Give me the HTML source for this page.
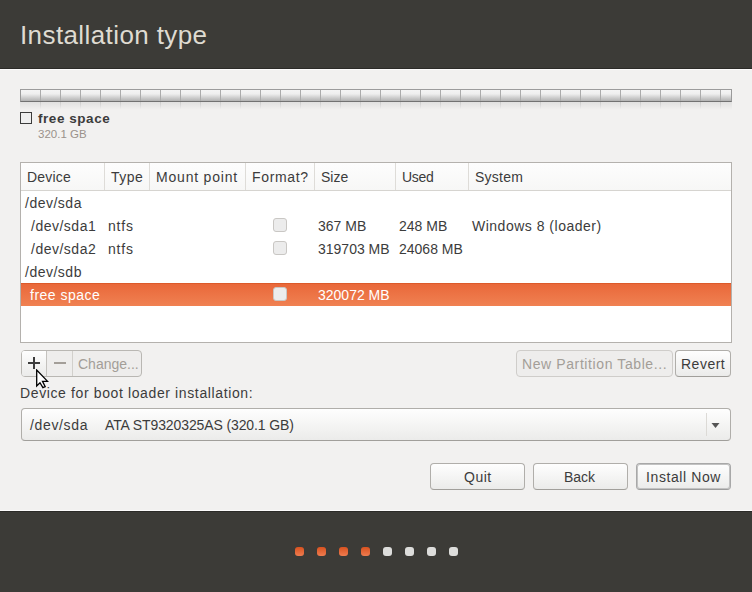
<!DOCTYPE html>
<html><head><meta charset="utf-8">
<style>
*{margin:0;padding:0;box-sizing:border-box}
html,body{width:752px;height:592px;overflow:hidden;background:#f2f1f0;font-family:"Liberation Sans",sans-serif;color:#3c3c3c}
div{position:absolute}
.t{font-size:14px;line-height:16px;white-space:nowrap;letter-spacing:0.5px}
.n{letter-spacing:0}
#hdr{left:0;top:0;width:752px;height:68px;background:#3c3b37}
#hdrl{left:0;top:68px;width:752px;height:1px;background:#2c2b28}
#hdrw{left:0;top:69px;width:752px;height:1px;background:#fdfcfb}
#title{left:20px;top:20px;font-size:26px;line-height:30px;color:#dfdbd2;white-space:nowrap;letter-spacing:0.4px}
#bar{left:20px;top:89px;width:712px;height:13px;border:1px solid #9a9a9a;border-bottom-color:#727272;border-top-color:#9c9c9c;background:linear-gradient(#f4f4f4,#efefef 35%,#c9c9c9 75%,#b2b2b2)}
#refl{left:20px;top:102px;width:712px;height:8px;background:linear-gradient(rgba(200,200,200,0.4),rgba(242,241,240,0))}
.bs{width:1px;top:90px;height:11px;background:#ababab}
.rs{width:1px;top:102px;height:7px;background:linear-gradient(rgba(160,160,160,0.35),rgba(242,241,240,0))}
#fs-cb{left:20px;top:112px;width:12px;height:12px;border:1px solid #3c3c3c;background:#efefef}
#tbl{left:20px;top:162px;width:712px;height:181px;border:1px solid #b4b1ad;background:#fff}
#th{left:21px;top:163px;width:710px;height:27px;background:linear-gradient(#fdfdfd,#f7f7f6)}
#thb{left:21px;top:190px;width:710px;height:1px;background:#d6d4d0}
.sep{top:163px;width:1px;height:27px;background:#dedcd8}
.cb{width:14px;height:14px;border:1px solid #c9c7c4;border-radius:3px;background:#ececec}
#sel{left:21px;top:283px;width:710px;height:23px;border-top:1px solid #dc5a2a;background:linear-gradient(#e9683a,#f08152)}
.btn{border:1px solid #b0aeaa;border-bottom-color:#a19f9b;border-radius:4px;background:linear-gradient(#fefefe,#f3f3f2 60%,#ebebea)}
.ins{background:#eeedec;border-color:#cfcdca}
.gry{color:#a39e98}
#ftrw{left:0;top:510px;width:752px;height:1px;background:#fdfcfb}
#ftrl{left:0;top:511px;width:752px;height:1px;background:#2c2b28}
#ftr{left:0;top:512px;width:752px;height:80px;background:#3c3b37}
.dot{top:547px;width:9px;height:9px;border-radius:3px}
.on{background:linear-gradient(#d9521f,#ef7c50)}
.off{background:#dddddb}
</style></head><body>
<div id="hdr"></div><div id="hdrl"></div><div id="hdrw"></div>
<div id="title">Installation type</div>

<div id="bar"></div>
<div id="refl"></div>
<div class="bs" style="left:40px"></div><div class="bs" style="left:60px"></div><div class="bs" style="left:80px"></div><div class="bs" style="left:100px"></div><div class="bs" style="left:120px"></div><div class="bs" style="left:140px"></div><div class="bs" style="left:160px"></div><div class="bs" style="left:180px"></div><div class="bs" style="left:200px"></div><div class="bs" style="left:220px"></div><div class="bs" style="left:240px"></div><div class="bs" style="left:260px"></div><div class="bs" style="left:280px"></div><div class="bs" style="left:300px"></div><div class="bs" style="left:320px"></div><div class="bs" style="left:340px"></div><div class="bs" style="left:360px"></div><div class="bs" style="left:380px"></div><div class="bs" style="left:400px"></div><div class="bs" style="left:420px"></div><div class="bs" style="left:440px"></div><div class="bs" style="left:460px"></div><div class="bs" style="left:480px"></div><div class="bs" style="left:500px"></div><div class="bs" style="left:520px"></div><div class="bs" style="left:540px"></div><div class="bs" style="left:560px"></div><div class="bs" style="left:580px"></div><div class="bs" style="left:600px"></div><div class="bs" style="left:620px"></div><div class="bs" style="left:640px"></div><div class="bs" style="left:660px"></div><div class="bs" style="left:680px"></div><div class="bs" style="left:700px"></div><div class="bs" style="left:720px"></div>

<div class="rs" style="left:40px"></div><div class="rs" style="left:60px"></div><div class="rs" style="left:80px"></div><div class="rs" style="left:100px"></div><div class="rs" style="left:120px"></div><div class="rs" style="left:140px"></div><div class="rs" style="left:160px"></div><div class="rs" style="left:180px"></div><div class="rs" style="left:200px"></div><div class="rs" style="left:220px"></div><div class="rs" style="left:240px"></div><div class="rs" style="left:260px"></div><div class="rs" style="left:280px"></div><div class="rs" style="left:300px"></div><div class="rs" style="left:320px"></div><div class="rs" style="left:340px"></div><div class="rs" style="left:360px"></div><div class="rs" style="left:380px"></div><div class="rs" style="left:400px"></div><div class="rs" style="left:420px"></div><div class="rs" style="left:440px"></div><div class="rs" style="left:460px"></div><div class="rs" style="left:480px"></div><div class="rs" style="left:500px"></div><div class="rs" style="left:520px"></div><div class="rs" style="left:540px"></div><div class="rs" style="left:560px"></div><div class="rs" style="left:580px"></div><div class="rs" style="left:600px"></div><div class="rs" style="left:620px"></div><div class="rs" style="left:640px"></div><div class="rs" style="left:660px"></div><div class="rs" style="left:680px"></div><div class="rs" style="left:700px"></div><div class="rs" style="left:720px"></div>
<div id="fs-cb"></div>
<div class="t" style="left:38px;top:111px;font-size:13.5px;font-weight:bold;letter-spacing:0.55px">free space</div>
<div class="gry" style="left:38px;top:127px;font-size:11.5px;line-height:14px;white-space:nowrap;color:#9a928b">320.1 GB</div>

<div id="tbl"></div>
<div id="th"></div><div id="thb"></div>
<div class="sep" style="left:104px"></div>
<div class="sep" style="left:149px"></div>
<div class="sep" style="left:245px"></div>
<div class="sep" style="left:314px"></div>
<div class="sep" style="left:395px"></div>
<div class="sep" style="left:468px"></div>
<div class="t" style="left:27px;top:169px;letter-spacing:0.2px">Device</div>
<div class="t" style="left:111px;top:169px">Type</div>
<div class="t" style="left:156px;top:169px;letter-spacing:0.8px">Mount point</div>
<div class="t" style="left:252px;top:169px;letter-spacing:0.65px">Format?</div>
<div class="t" style="left:321px;top:169px;letter-spacing:0">Size</div>
<div class="t" style="left:402px;top:169px;letter-spacing:-0.3px">Used</div>
<div class="t" style="left:475px;top:169px;letter-spacing:0.25px">System</div>

<div class="t" style="left:25px;top:195px">/dev/sda</div>
<div class="t" style="left:31px;top:218px">/dev/sda1</div>
<div class="t" style="left:108px;top:218px;letter-spacing:0.8px">ntfs</div>
<div class="cb" style="left:273px;top:218px"></div>
<div class="t n" style="left:318px;top:218px">367 MB</div>
<div class="t n" style="left:399px;top:218px">248 MB</div>
<div class="t" style="left:472px;top:218px">Windows 8 (loader)</div>
<div class="t" style="left:31px;top:241px">/dev/sda2</div>
<div class="t" style="left:108px;top:241px;letter-spacing:0.8px">ntfs</div>
<div class="cb" style="left:273px;top:241px"></div>
<div class="t n" style="left:318px;top:241px">319703 MB</div>
<div class="t n" style="left:399px;top:241px">24068 MB</div>
<div class="t" style="left:25px;top:264px">/dev/sdb</div>
<div id="sel"></div>
<div class="t" style="left:30px;top:287px;color:#fff">free space</div>
<div class="cb" style="left:273px;top:287px"></div>
<div class="t n" style="left:318px;top:287px;color:#fff">320072 MB</div>

<!-- +/-/change group -->
<div class="btn" style="left:21px;top:350px;width:121px;height:27px;background:#eeedec;border-color:#b9b7b3"></div>
<div style="left:22px;top:351px;width:24px;height:25px;border-radius:2px 0 0 2px;background:linear-gradient(#fefefe,#f2f2f1 60%,#ebebea)"></div>
<div style="left:46px;top:351px;width:1px;height:25px;background:#c4c2be"></div>
<div style="left:72px;top:351px;width:1px;height:25px;background:#d2d0cc"></div>
<div style="left:28px;top:362px;width:12px;height:2px;background:#3c3c3c"></div>
<div style="left:33px;top:357px;width:2px;height:12px;background:#3c3c3c"></div>
<div style="left:54px;top:362px;width:12px;height:2px;background:#a39e98"></div>
<div class="t gry" style="left:78px;top:356px;letter-spacing:0">Change...</div>

<div class="btn ins" style="left:516px;top:350px;width:157px;height:27px"></div>
<div class="t gry" style="left:522px;top:356px;letter-spacing:0.6px">New Partition Table...</div>
<div class="btn" style="left:675px;top:350px;width:56px;height:27px"></div>
<div class="t" style="left:681px;top:356px;letter-spacing:0.5px">Revert</div>

<div class="t" style="left:20px;top:385px;letter-spacing:0.62px">Device for boot loader installation:</div>
<div class="btn" style="left:21px;top:408px;width:710px;height:33px;border-radius:4px"></div>
<div style="left:706px;top:413px;width:1px;height:23px;background:#dcdad6"></div>
<svg style="position:absolute;left:711px;top:422px" width="9" height="7"><polygon points="0.5,1 8.5,1 4.5,6" fill="#555"/></svg>
<div class="t" style="left:30px;top:417px;letter-spacing:0.65px">/dev/sda</div>
<div class="t" style="left:105px;top:417px;letter-spacing:-0.11px">ATA ST9320325AS (320.1 GB)</div>

<div class="btn" style="left:430px;top:463px;width:95px;height:27px"></div>
<div class="t" style="left:464px;top:469px">Quit</div>
<div class="btn" style="left:533px;top:463px;width:95px;height:27px"></div>
<div class="t" style="left:564px;top:469px;letter-spacing:0">Back</div>
<div class="btn" style="left:636px;top:463px;width:95px;height:27px;border-color:#a8a8a8;border-bottom-color:#9c9c9c;box-shadow:inset 0 0 0 1px #c2c2c2"></div>
<div class="t" style="left:646px;top:469px;letter-spacing:0.6px">Install Now</div>

<div id="ftrw"></div><div id="ftrl"></div><div id="ftr"></div>
<div class="dot on" style="left:295px"></div>
<div class="dot on" style="left:317px"></div>
<div class="dot on" style="left:339px"></div>
<div class="dot on" style="left:361px"></div>
<div class="dot off" style="left:383px"></div>
<div class="dot off" style="left:405px"></div>
<div class="dot off" style="left:427px"></div>
<div class="dot off" style="left:449px"></div>

<svg style="position:absolute;left:35px;top:369px" width="14" height="21" viewBox="0 0 14 21"><polygon points="1.7,1 1.7,17 5,13.7 7.9,18.6 10.2,17.6 7.5,12.4 12.6,12.4" fill="#fff" stroke="#000" stroke-width="1.3" stroke-linejoin="miter"/></svg>
</body></html>
